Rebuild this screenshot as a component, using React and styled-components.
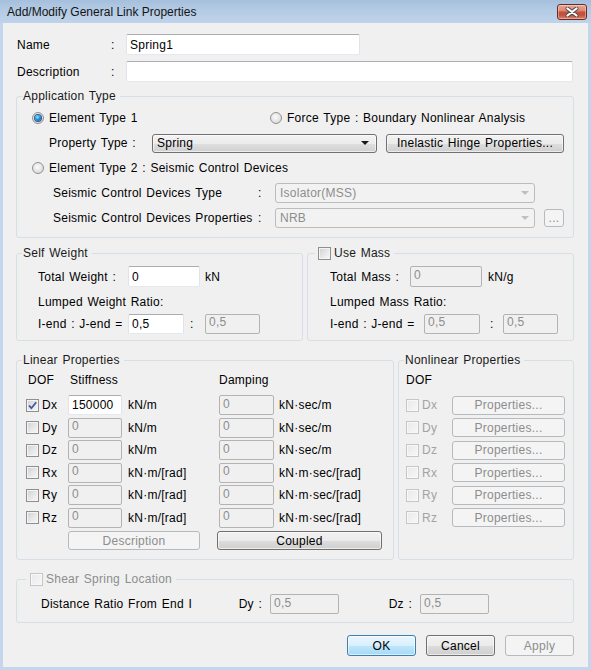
import React from "react";
import styled, { createGlobalStyle } from "styled-components";

const GlobalStyle = createGlobalStyle`
  html, body {
    margin: 0;
    padding: 0;
    background: #f0f0f0;
  }
  body {
    font-family: "Liberation Sans", Arial, sans-serif;
    font-size: 12px;
    color: #000;
  }
  * {
    box-sizing: border-box;
  }
`;

const Window = styled.div`
  width: 591px;
  height: 670px;
  display: flex;
  flex-direction: column;
  overflow: hidden;
`;

const TitleBar = styled.div`
  height: 23px;
  flex-shrink: 0;
  display: flex;
  align-items: center;
  justify-content: space-between;
  padding: 0 4px 0 7px;
  background: linear-gradient(to bottom, #a5bfdc 0%, #b4cbe5 45%, #bfd3ea 100%);
`;

const Title = styled.span`
  font-size: 12px;
  color: #141414;
`;

const CloseButton = styled.div`
  width: 30px;
  height: 16px;
  border: 1px solid #6e2a22;
  border-radius: 3px;
  background: linear-gradient(to bottom, #e7a795 0%, #d98a76 40%, #c5523c 50%, #c24f3a 70%, #d9826b 100%);
  box-shadow: inset 0 0 0 1px rgba(255, 255, 255, 0.35);
  display: flex;
  align-items: center;
  justify-content: center;
`;

const Body = styled.div`
  flex: 1;
  display: flex;
  flex-direction: column;
  background: #f0f0f0;
  border: 3px solid #c3d6eb;
  border-top: 0;
  padding: 11px 14px 0 13px;
  letter-spacing: 0.25px;
  word-spacing: 1px;
`;

const FormRow = styled.div`
  display: flex;
  align-items: center;
  height: 21px;
  margin-top: ${(p) => p.$mt || 0}px;
`;

const FormLabel = styled.span`
  width: 95px;
  padding-left: 1px;
  flex-shrink: 0;
`;

const Colon = styled.span`
  width: 15px;
  flex-shrink: 0;
`;

const TextBox = styled.input`
  width: ${(p) => p.$w}px;
  height: ${(p) => p.$h || 20}px;
  flex-shrink: 0;
  padding: 0 3px;
  font-family: inherit;
  font-size: 12px;
  letter-spacing: inherit;
  color: #000;
  background: #fff;
  border: 1px solid #e2e3ea;
  border-top-color: #abadb3;
  border-bottom-color: #e3e9ef;
  border-radius: 2px;
  outline: none;

  &:disabled {
    background: #f0f0f0;
    color: #8d8d8d;
    border: 1px solid #b3b3b3;
    padding-bottom: 3px;
  }
`;

const Group = styled.fieldset`
  margin: ${(p) => p.$mt || 0}px 0 0;
  padding: ${(p) => p.$pt}px 4px ${(p) => p.$pb}px 5px;
  border: 1px solid #d5dfe5;
  border-radius: 3px;
  min-width: 0;
  width: ${(p) => (p.$w ? `${p.$w}px` : "auto")};
  flex-shrink: 0;
`;

const GroupTitle = styled.legend`
  margin-left: ${(p) => p.$ml || 0}px;
  padding: 0 4px 0 ${(p) => (p.$pl === undefined ? 1 : p.$pl)}px;
  height: 14px;
  line-height: 14px;
  font-size: 12px;
  color: ${(p) => (p.$disabled ? "#8d8d8d" : "#1a1a1a")};
`;

const TitleInner = styled.span`
  display: inline-flex;
  align-items: center;
  gap: 3px;
  height: 14px;
  vertical-align: top;
`;

const AppRows = styled.div`
  display: flex;
  flex-direction: column;
  gap: 5px;
  padding-left: 10px;
`;

const AppRow = styled.div`
  display: flex;
  align-items: center;
  height: 20px;
`;

const Option = styled.label`
  display: inline-flex;
  align-items: center;
  gap: 5px;
  width: ${(p) => (p.$w ? `${p.$w}px` : "auto")};
  flex-shrink: 0;
  white-space: nowrap;
`;

const Radio = styled.span`
  width: 12px;
  height: 12px;
  flex-shrink: 0;
  border-radius: 50%;
  border: 1px solid #929292;
  background: radial-gradient(circle at 45% 40%, #fbfbfb 0%, #e2e2e2 60%, #cdcdcd 100%);
  display: inline-flex;
  align-items: center;
  justify-content: center;

  &::after {
    content: "";
    display: ${(p) => (p.$on ? "block" : "none")};
    width: 6px;
    height: 6px;
    border-radius: 50%;
    background: radial-gradient(circle at 40% 35%, #9fe0ff 0%, #2592dc 45%, #0d3f78 100%);
    box-shadow: 0 0 0 1px #2b5d8c;
  }
`;

const Check = styled.span`
  width: 13px;
  height: 13px;
  flex-shrink: 0;
  border: 1px solid ${(p) => (p.$disabled ? "#c6c6c6" : "#8e8f8f")};
  background: ${(p) =>
    p.$disabled
      ? "linear-gradient(135deg, #e9e9e9 0%, #f7f7f7 100%)"
      : "linear-gradient(135deg, #cfcfd2 0%, #e6e6e8 50%, #f8f8f8 100%)"};
  box-shadow: inset 0 0 0 1px ${(p) => (p.$disabled ? "#f8f8f8" : "#f4f4f4")};
  display: inline-flex;
  align-items: center;
  justify-content: center;
`;

const CheckBox = ({ checked, disabled }) => (
  <Check $disabled={disabled}>
    {checked && (
      <svg width="11" height="11" viewBox="0 0 11 11">
        <path d="M2 5.5 L4.4 8.2 L9.2 2.2" stroke="#3d59a3" strokeWidth="1.8" fill="none" />
      </svg>
    )}
  </Check>
);

const PropLabel = styled.span`
  width: ${(p) => p.$w}px;
  padding-left: ${(p) => p.$pl || 0}px;
  flex-shrink: 0;
  white-space: nowrap;
`;

const Combo = styled.div`
  width: ${(p) => p.$w}px;
  height: ${(p) => p.$h || 20}px;
  flex-shrink: 0;
  display: flex;
  align-items: center;
  justify-content: space-between;
  padding: 0 ${(p) => (p.$disabled ? 5 : 7)}px 0 4px;
  border: 1px solid ${(p) => (p.$disabled ? "#bcbcbc" : "#707070")};
  border-radius: 3px;
  color: ${(p) => (p.$disabled ? "#8d8d8d" : "#000")};
  background: ${(p) =>
    p.$disabled
      ? "#f2f2f2"
      : "linear-gradient(to bottom, #f3f3f3 0%, #ececec 50%, #dfdfdf 52%, #d0d0d0 100%)"};
  box-shadow: ${(p) => (p.$disabled ? "none" : "inset 0 0 0 1px rgba(255,255,255,0.6)")};
`;

const Arrow = styled.span`
  width: 0;
  height: 0;
  border-left: 4px solid transparent;
  border-right: 4px solid transparent;
  border-top: 4px solid ${(p) => (p.$disabled ? "#c0c0c0" : "#1a1a1a")};
`;

const Button = styled.button`
  width: ${(p) => p.$w}px;
  height: ${(p) => p.$h || 19}px;
  flex-shrink: 0;
  padding: 0;
  font-family: inherit;
  font-size: 12px;
  letter-spacing: inherit;
  word-spacing: inherit;
  white-space: nowrap;
  color: #000;
  border: 1px solid ${(p) => (p.$primary ? "#3c7fb1" : "#707070")};
  border-radius: 3px;
  background: ${(p) =>
    p.$primary
      ? "linear-gradient(to bottom, #eaf6fd 0%, #d9f0fc 50%, #bee6fd 52%, #a7d9f5 100%)"
      : "linear-gradient(to bottom, #f2f2f2 0%, #ebebeb 50%, #dddddd 52%, #cfcfcf 100%)"};
  box-shadow: inset 0 0 0 1px rgba(255, 255, 255, 0.6);
  margin-left: ${(p) => p.$ml || 0}px;

  &:disabled {
    color: #8d8d8d;
    border-color: #b7babc;
    background: #f4f4f4;
    box-shadow: none;
  }
`;

const PanelRow = styled.div`
  display: flex;
  gap: 4px;
  margin-top: ${(p) => p.$mt || 0}px;
`;

const WeightBody = styled.div`
  padding-left: ${(p) => p.$pl}px;
  display: flex;
  flex-direction: column;
`;

const WeightRow = styled.div`
  display: flex;
  align-items: center;
  height: 21px;
  margin-top: ${(p) => p.$mt || 0}px;
`;

const RatioTitle = styled.div`
  height: 14px;
  line-height: 14px;
  margin-top: 8px;
`;

const Unit = styled.span`
  padding-left: ${(p) => p.$pl || 5}px;
  white-space: nowrap;
`;

const Sep = styled.span`
  width: ${(p) => p.$w}px;
  padding-left: ${(p) => p.$pl}px;
  flex-shrink: 0;
`;

const DOF_COLS = "42px 54px 97px 55px 1fr";
const NL_COLS = "46px 113px";

const HeadRow = styled.div`
  display: grid;
  grid-template-columns: ${(p) => p.$cols};
  height: 14px;
  line-height: 14px;
  padding-left: ${(p) => p.$pl}px;
`;

const HeadCell = styled.span`
  padding-left: ${(p) => p.$pl || 0}px;
`;

const DofRows = styled.div`
  display: grid;
  grid-template-columns: ${(p) => p.$cols};
  grid-auto-rows: 20px;
  row-gap: 2.5px;
  align-items: center;
  padding-left: ${(p) => p.$pl}px;
  margin-top: 8px;
`;

const DofCell = styled.label`
  display: flex;
  align-items: center;
  gap: 3px;
  color: ${(p) => (p.$disabled ? "#a3a3a3" : "#000")};
`;

const ActionRow = styled.div`
  display: grid;
  grid-template-columns: ${DOF_COLS};
  height: 19px;
  margin-top: 3.5px;
  padding-left: 4px;
`;

const ShearRow = styled.div`
  display: flex;
  align-items: center;
  height: 20px;
  padding-left: 19px;
`;

const ShearText = styled.span`
  width: 192px;
  flex-shrink: 0;
  white-space: nowrap;
`;

const Axis = styled.span`
  width: ${(p) => p.$w}px;
  flex-shrink: 0;
  text-align: right;
  padding-right: 8px;
`;

const Footer = styled.div`
  display: flex;
  justify-content: flex-end;
  gap: 10px;
  margin-top: 12px;
`;

const dofs = [
  { id: "Dx", k: "kN/m", c: "kN·sec/m" },
  { id: "Dy", k: "kN/m", c: "kN·sec/m" },
  { id: "Dz", k: "kN/m", c: "kN·sec/m" },
  { id: "Rx", k: "kN·m/[rad]", c: "kN·m·sec/[rad]" },
  { id: "Ry", k: "kN·m/[rad]", c: "kN·m·sec/[rad]" },
  { id: "Rz", k: "kN·m/[rad]", c: "kN·m·sec/[rad]" },
];

export default function App() {
  return (
    <>
      <GlobalStyle />
      <Window>
        <TitleBar>
          <Title>Add/Modify General Link Properties</Title>
          <CloseButton>
            <svg width="14" height="10" viewBox="0 0 14 10">
              <path d="M2.5 1.5 L11.5 8.5 M11.5 1.5 L2.5 8.5" stroke="#4b4b4b" strokeWidth="4" strokeLinecap="round" />
              <path d="M2.5 1.5 L11.5 8.5 M11.5 1.5 L2.5 8.5" stroke="#ffffff" strokeWidth="2.2" strokeLinecap="round" />
            </svg>
          </CloseButton>
        </TitleBar>

        <Body>
          <FormRow>
            <FormLabel>Name</FormLabel>
            <Colon>:</Colon>
            <TextBox $w={234} $h={21} defaultValue="Spring1" />
          </FormRow>
          <FormRow $mt={6}>
            <FormLabel>Description</FormLabel>
            <Colon>:</Colon>
            <TextBox $w={447} $h={21} defaultValue="" />
          </FormRow>

          <Group $mt={7} $pt={5} $pb={9}>
            <GroupTitle>Application Type</GroupTitle>
            <AppRows>
              <AppRow>
                <Option $w={238}>
                  <Radio $on />
                  Element Type 1
                </Option>
                <Option>
                  <Radio />
                  Force Type : Boundary Nonlinear Analysis
                </Option>
              </AppRow>
              <AppRow>
                <PropLabel $w={120} $pl={17}>Property Type :</PropLabel>
                <Combo $w={225} $h={19}>
                  <span>Spring</span>
                  <Arrow />
                </Combo>
                <Button $w={178} $ml={9}>Inelastic Hinge Properties...</Button>
              </AppRow>
              <AppRow>
                <Option>
                  <Radio />
                  Element Type 2 : Seismic Control Devices
                </Option>
              </AppRow>
              <AppRow>
                <PropLabel $w={226} $pl={21}>Seismic Control Devices Type</PropLabel>
                <Sep $w={17} $pl={0}>:</Sep>
                <Combo $w={260} $disabled>
                  <span>Isolator(MSS)</span>
                  <Arrow $disabled />
                </Combo>
              </AppRow>
              <AppRow>
                <PropLabel $w={226} $pl={21}>Seismic Control Devices Properties</PropLabel>
                <Sep $w={17} $pl={0}>:</Sep>
                <Combo $w={260} $disabled>
                  <span>NRB</span>
                  <Arrow $disabled />
                </Combo>
                <Button $w={20} $h={18} $ml={9} disabled>...</Button>
              </AppRow>
            </AppRows>
          </Group>

          <PanelRow $mt={8}>
            <Group $w={287} $pt={6} $pb={6}>
              <GroupTitle>Self Weight</GroupTitle>
              <WeightBody $pl={16}>
                <WeightRow>
                  <PropLabel $w={90}>Total Weight :</PropLabel>
                  <TextBox $w={72} $h={21} defaultValue="0" />
                  <Unit>kN</Unit>
                </WeightRow>
                <RatioTitle>Lumped Weight Ratio:</RatioTitle>
                <WeightRow $mt={4}>
                  <PropLabel $w={90}>I-end : J-end =</PropLabel>
                  <TextBox $w={56} defaultValue="0,5" />
                  <Sep $w={21} $pl={6}>:</Sep>
                  <TextBox $w={55} disabled defaultValue="0,5" />
                </WeightRow>
              </WeightBody>
            </Group>
            <Group $w={267} $pt={6} $pb={6}>
              <GroupTitle $ml={2} $pl={3}>
                <TitleInner>
                  <CheckBox />
                  Use Mass
                </TitleInner>
              </GroupTitle>
              <WeightBody $pl={17}>
                <WeightRow>
                  <PropLabel $w={80}>Total Mass :</PropLabel>
                  <TextBox $w={72} $h={21} disabled defaultValue="0" />
                  <Unit $pl={6}>kN/g</Unit>
                </WeightRow>
                <RatioTitle>Lumped Mass Ratio:</RatioTitle>
                <WeightRow $mt={4}>
                  <PropLabel $w={94}>I-end : J-end =</PropLabel>
                  <TextBox $w={56} disabled defaultValue="0,5" />
                  <Sep $w={23} $pl={10}>:</Sep>
                  <TextBox $w={55} disabled defaultValue="0,5" />
                </WeightRow>
              </WeightBody>
            </Group>
          </PanelRow>

          <PanelRow $mt={12}>
            <Group $w={378} $pt={6} $pb={9}>
              <GroupTitle>Linear Properties</GroupTitle>
              <HeadRow $cols={DOF_COLS} $pl={4}>
                <HeadCell $pl={2}>DOF</HeadCell>
                <HeadCell $pl={2}>Stiffness</HeadCell>
                <span />
                <HeadCell>Damping</HeadCell>
              </HeadRow>
              <DofRows $cols={DOF_COLS} $pl={4}>
                {dofs.map((d, i) => (
                  <React.Fragment key={d.id}>
                    <DofCell>
                      <CheckBox checked={i === 0} />
                      {d.id}
                    </DofCell>
                    {i === 0 ? (
                      <TextBox $w={54} defaultValue="150000" />
                    ) : (
                      <TextBox $w={54} disabled defaultValue="0" />
                    )}
                    <Unit $pl={6}>{d.k}</Unit>
                    <TextBox $w={55} disabled defaultValue="0" />
                    <Unit $pl={5}>{d.c}</Unit>
                  </React.Fragment>
                ))}
              </DofRows>
              <ActionRow>
                <span />
                <Button $w={132} disabled style={{ gridColumn: "2 / 4" }}>
                  Description
                </Button>
                <Button $w={165} $ml={-2} style={{ gridColumn: "4 / 6" }}>
                  Coupled
                </Button>
              </ActionRow>
            </Group>
            <Group $w={176} $pt={6} $pb={9}>
              <GroupTitle>Nonlinear Properties</GroupTitle>
              <HeadRow $cols={NL_COLS} $pl={2}>
                <HeadCell>DOF</HeadCell>
              </HeadRow>
              <DofRows $cols={NL_COLS} $pl={2}>
                {dofs.map((d) => (
                  <React.Fragment key={d.id}>
                    <DofCell $disabled>
                      <CheckBox disabled />
                      {d.id}
                    </DofCell>
                    <Button $w={113} disabled>
                      Properties...
                    </Button>
                  </React.Fragment>
                ))}
              </DofRows>
            </Group>
          </PanelRow>

          <Group $mt={12} $pt={8} $pb={8}>
            <GroupTitle $ml={4} $pl={4} $disabled>
              <TitleInner>
                <CheckBox disabled />
                Shear Spring Location
              </TitleInner>
            </GroupTitle>
            <ShearRow>
              <ShearText>Distance Ratio From End I</ShearText>
              <Axis $w={37}>Dy :</Axis>
              <TextBox $w={69} disabled defaultValue="0,5" />
              <Axis $w={81}>Dz :</Axis>
              <TextBox $w={69} disabled defaultValue="0,5" />
            </ShearRow>
          </Group>

          <Footer>
            <Button $w={69} $h={21} $primary>OK</Button>
            <Button $w={69} $h={21}>Cancel</Button>
            <Button $w={69} $h={21} disabled>Apply</Button>
          </Footer>
        </Body>
      </Window>
    </>
  );
}
